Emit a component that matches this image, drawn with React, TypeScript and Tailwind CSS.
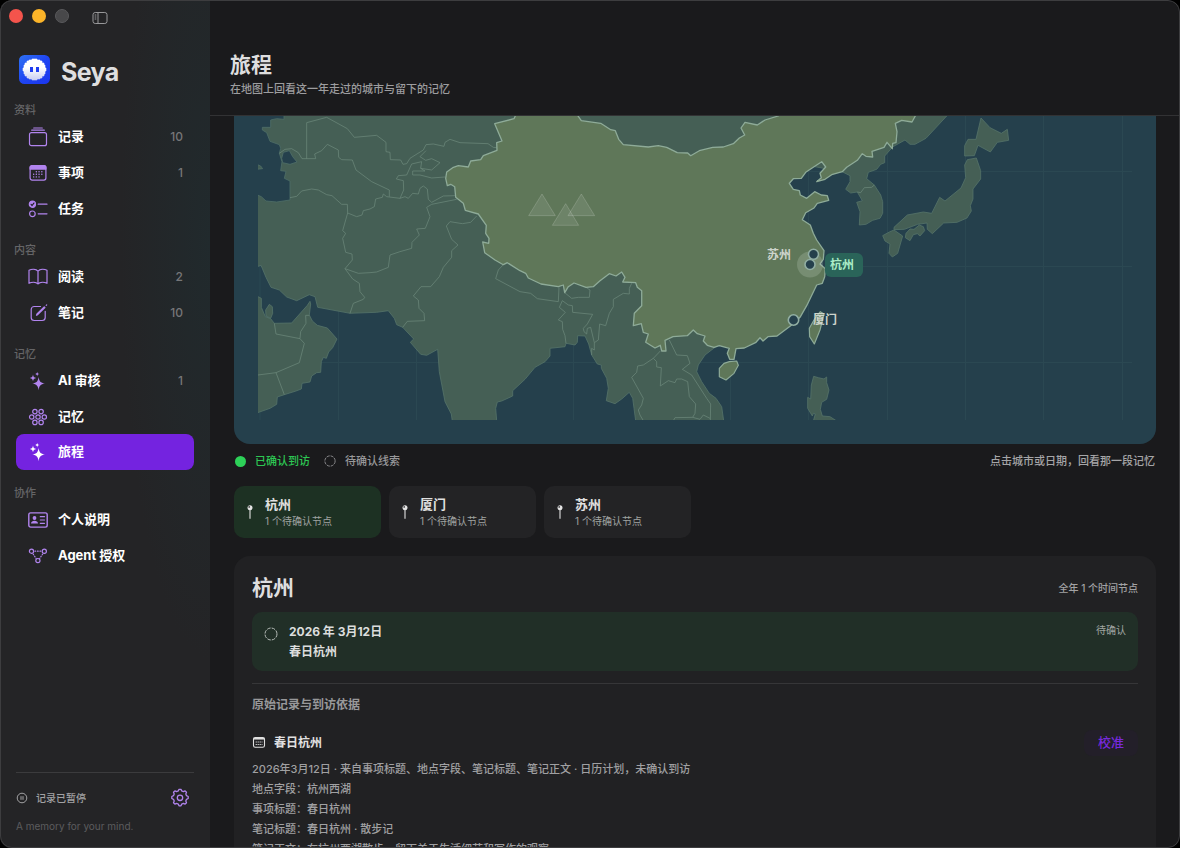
import type { ReactNode } from "react";

const ACCENT = "#b184ee";

function Icon({ children, className = "h-5 w-5" }: { children: ReactNode; className?: string }) {
  return (
    <svg viewBox="0 0 20 20" className={className} fill="none" stroke="currentColor" strokeWidth="1.2" strokeLinecap="round" strokeLinejoin="round" aria-hidden="true">
      {children}
    </svg>
  );
}

const icons: Record<string, ReactNode> = {
  records: (
    <>
      <rect x="1.5" y="5.7" width="17" height="13" rx="2" />
      <path d="M3.7 3.2h12.6M5.7 1h8.6" />
    </>
  ),
  calendar: (
    <>
      <rect x="2.1" y="2.5" width="15.8" height="14.6" rx="2" />
      <path d="M2.1 4.5a2 2 0 0 1 2-2h11.8a2 2 0 0 1 2 2v1.6H2.1z" fill="currentColor" />
      <path d="M8.3 8.7h.1M11 8.7h.1M13.8 8.7h.1M5.6 11.3h.1M8.3 11.3h.1M11 11.3h.1M13.8 11.3h.1M5.6 13.9h.1M8.3 13.9h.1M11 13.9h.1" strokeWidth="1.4" />
    </>
  ),
  tasks: (
    <>
      <circle cx="4.4" cy="5.2" r="3.1" fill="currentColor" />
      <path d="M3.1 5.3l1 1.2 1.800-2.400" stroke="#242426" />
      <circle cx="4.4" cy="14.8" r="2.8" />
      <path d="M10.2 5.2h8.8M10.2 14.8h8.8" />
    </>
  ),
  book: <path d="M10 4.2C8 2.100 4 1.900 1 3.300v13c3-1.400 7-1.200 9 .6 2-1.800 6-2 9-.6v-13C16 1.900 12 2.100 10 4.200zM10 4.200v12.700" />,
  note: (
    <>
      <path d="M12.500 3.500H6.200a3 3 0 0 0-3 3v8a3 3 0 0 0 3 3h8a3 3 0 0 0 3-3V8.300" />
      <path d="M8.500 12.300l.5-1.300 7.200-7.200.7.700-7.200 7.200zM18.200 2.300l.5-.5" />
    </>
  ),
  sparkles: (
    <g fill="currentColor" stroke="none">
      <path d="M10.600 6c.7 4.400 1.900 5.800 6.300 6.600-4.400.8-5.600 2.200-6.300 6.600-.7-4.400-1.900-5.800-6.300-6.600C8.700 11.800 9.900 10.400 10.600 6z" />
      <path d="M5 3.500c.4 2.300 1 3 3.200 3.400C6 7.300 5.400 8 5 10.300 4.600 8 4 7.300 1.800 6.900 4 6.500 4.600 5.800 5 3.500z" />
      <path d="M9.200.8c.3 1.500.7 2 2.200 2.300-1.500.3-1.900.8-2.200 2.300-.3-1.500-.7-2-2.200-2.300 1.500-.3 1.900-.8 2.200-2.300z" />
    </g>
  ),
  memory: (
    <>
      {[[6.9, 4.6], [13.1, 4.6], [3.7, 10], [10, 10], [16.3, 10], [6.9, 15.4], [13.1, 15.4]].map(([x, y]) => (
        <circle key={`${x}-${y}`} cx={x} cy={y} r="2.200" />
      ))}
    </>
  ),
  profile: (
    <>
      <rect x=".8" y="2.900" width="18.400" height="14.200" rx="1.800" strokeWidth="1.400" />
      <circle cx="6.500" cy="8" r="1.900" fill="currentColor" stroke="none" />
      <path d="M3 13.600c0-3.800 7-3.800 7 0z" fill="currentColor" stroke="none" />
      <path d="M12.300 6.700h4.200M12.300 10h4.200M12.300 13.300h4.200" />
    </>
  ),
  agent: (
    <>
      <circle cx="3.500" cy="5.200" r="2.100" />
      <circle cx="16.300" cy="5.200" r="2.100" />
      <circle cx="9.900" cy="14.600" r="2.100" />
      <path d="M7 5.200h6M5.200 8.200l2.900 4.200M14.600 8.200l-2.900 4.200" strokeDasharray=".7 1.800" />
    </>
  ),
};

type Item = { icon: string; label: string; count?: number; active?: boolean };
const groups: { title: string; items: Item[] }[] = [
  {
    title: "资料",
    items: [
      { icon: "records", label: "记录", count: 10 },
      { icon: "calendar", label: "事项", count: 1 },
      { icon: "tasks", label: "任务" },
    ],
  },
  {
    title: "内容",
    items: [
      { icon: "book", label: "阅读", count: 2 },
      { icon: "note", label: "笔记", count: 10 },
    ],
  },
  {
    title: "记忆",
    items: [
      { icon: "sparkles", label: "AI 审核", count: 1 },
      { icon: "memory", label: "记忆" },
      { icon: "sparkles", label: "旅程", active: true },
    ],
  },
  {
    title: "协作",
    items: [
      { icon: "profile", label: "个人说明" },
      { icon: "agent", label: "Agent 授权" },
    ],
  },
];

function AppLogo() {
  return (
    <svg viewBox="0 0 31 29" className="h-[29px] w-[31px]" aria-hidden="true">
      <defs>
        <linearGradient id="logo-bg" x1="0" y1="0" x2="1" y2="1">
          <stop offset="0" stopColor="#2f73f3" />
          <stop offset=".5" stopColor="#1f45f2" />
          <stop offset="1" stopColor="#1b35ee" />
        </linearGradient>
        <linearGradient id="logo-puff" x1="0" y1="0" x2="0" y2="1">
          <stop offset=".4" stopColor="#fff" />
          <stop offset="1" stopColor="#c9cdf2" />
        </linearGradient>
      </defs>
      <rect width="31" height="29" rx="5.500" fill="url(#logo-bg)" />
      <path
        d="M13 4h5v1h3v1h2v2h2v2h1v3h1v3h-1v3h-1v2h-2v2h-2v1h-3v1h-5v-1h-3v-1H8v-2H6v-2H5v-3H4v-3h1v-3h1V8h2V6h2V5h3z"
        fill="url(#logo-puff)"
        stroke="url(#logo-puff)"
        strokeWidth=".6"
        strokeLinejoin="round"
      />
      <path d="M11 12h3v5h-3zM17 12h3v5h-3z" fill="#1f3df0" />
    </svg>
  );
}

function Sidebar() {
  return (
    <aside className="flex w-[210px] shrink-0 flex-col bg-[#242426] bg-[radial-gradient(ellipse_90px_420px_at_210px_240px,#212a2d,#242426)]">
      <div className="flex h-8 items-center pl-[9px]">
        <div className="flex gap-[9px]">
          <button aria-label="关闭" className="h-3.5 w-3.5 rounded-full bg-[#f4544c]" />
          <button aria-label="最小化" className="h-3.5 w-3.5 rounded-full bg-[#fbb429]" />
          <button aria-label="缩放" className="h-3.5 w-3.5 rounded-full border border-[#5a5a5c] bg-[#48484a]" />
        </div>
        <button aria-label="切换边栏" className="mt-1 ml-[23px] text-[#98989a]">
          <svg viewBox="0 0 16 14" className="h-3.5 w-4" fill="none" stroke="currentColor" strokeWidth="1">
            <rect x="1" y="1.500" width="14" height="11" rx="2.200" />
            <path d="M6 1.500v11M2.700 4h1.600M2.700 6h1.600M2.700 8h1.600" />
          </svg>
        </button>
      </div>
      <div className="mt-5 flex h-[35px] items-center gap-[11px] pl-[19px]">
        <AppLogo />
        <span className="pt-1 text-[25px] leading-8 font-bold tracking-tight text-[#dededf]">Seya</span>
      </div>
      <nav className="mt-3.5 flex flex-col gap-3.5">
        {groups.map((g) => (
          <section key={g.title}>
            <h2 className="pl-3.5 text-[11px] leading-[18px] font-medium text-[#656567]">{g.title}</h2>
            <ul className="px-4">
              {g.items.map((it) => (
                <li key={it.label}>
                  <a
                    href="#"
                    className={
                      it.active
                        ? "-mt-px flex h-9 items-center rounded-lg bg-[#7423e0] pr-[11px] pl-3 text-white"
                        : "flex h-9 items-center rounded-lg pr-[11px] pl-3 text-[#b184ee]"
                    }
                  >
                    <Icon>{icons[it.icon]}</Icon>
                    <span className="ml-2.5 text-[13px] font-bold text-white">{it.label}</span>
                    {it.count !== undefined && <span className="ml-auto text-xs font-medium text-[#767678]">{it.count}</span>}
                  </a>
                </li>
              ))}
            </ul>
          </section>
        ))}
      </nav>
      <footer className="mt-auto px-4 pb-3">
        <div className="flex items-center border-t border-[#3b3b3d] pt-[15px] pr-1 text-[#a2a2a4]">
          <svg viewBox="0 0 12 12" className="h-3 w-3" fill="none" stroke="currentColor" strokeWidth="1" aria-hidden="true">
            <circle cx="6" cy="6" r="4.800" />
            <path d="M5 4.200v3.600M7 4.200v3.600" />
          </svg>
          <span className="ml-2 text-[10px] font-medium">记录已暂停</span>
          <button aria-label="设置" className="ml-auto">
            <svg viewBox="0 0 20 20" className="h-5 w-5" fill="none" stroke={ACCENT} strokeWidth="1.300" strokeLinejoin="round">
              <path d="M8.300 2.900 9 1.300h2l.7 1.600 1.700.7 1.700-.7 1.400 1.400-.7 1.700.7 1.700 1.700.8v2l-1.700.8-.7 1.700.7 1.700-1.400 1.400-1.700-.7-1.700.7-.7 1.700H9l-.7-1.700-1.700-.7-1.700.7-1.400-1.400.7-1.700-.7-1.700-1.700-.8v-2l1.700-.8.700-1.700-.7-1.700 1.400-1.400 1.700.7z" />
              <circle cx="10" cy="9.800" r="2.700" />
            </svg>
          </button>
        </div>
        <p className="mt-2 text-[10px] leading-5 text-[#5c5c5e]">A memory for your mind.</p>
      </footer>
    </aside>
  );
}

const mainland =
  "258,110 953,110 946.7,116 926,138.3 915,144.3 910,144.3 905,140 893,146.7 890,150 884.7,156 884.7,162.7 880.7,164.3 876.7,169.3 868.3,172.3 866.7,178.7 874.3,185 880.7,195 882.7,201.7 882.7,213.3 880,218.3 872.7,220.3 866,224.3 859.3,225 860,211.7 856.7,202.3 862.3,200.7 857.3,192 850.7,193 845.7,189.3 850,181.7 850,175.7 842.7,172 780,160 700,330 716.7,346 705,355 698.3,365 696.7,371.7 701.7,381.7 709.3,393.3 716,398.3 721.7,406.7 723.7,421 635.7,421 634,408.3 632.7,398.3 629.3,392.3 621.7,399 615,403.7 606.3,400.7 608.3,388.3 606.7,378.3 601.3,368.3 601.3,365 597.3,364 591.7,355 588.7,344 585,336 577.7,335.7 577.3,342.3 575,345 566,343.3 565,346.7 550,348.3 550,356 545,361.7 535,367.3 525,379.3 512.7,390.7 512.7,396 501.7,401 497.3,402 495.7,408.3 496.7,421 452.3,421 451.3,414 445,401.7 439.3,371.7 437.7,349.3 426.7,355.3 420.7,354.3 410.3,342.3 413.7,339 402.7,327.3 396.7,324.7 394.3,318.3 388.3,310.7 376.7,312.3 350,313.3 317.7,307.3 315,296.7 309.3,294.7 296.7,300.7 286.7,297 279.3,290 271,287.3 266,277.3 261,265.3 257,266.7";

const china =
  "515.3,110 515.3,116 514,118.7 494.7,123.7 502,141 496.7,142.7 497,150.3 483.3,155.7 480.7,159.7 470.7,161 468.3,167 458.3,165.7 452.7,167.7 446.7,172 445.7,178.3 447.3,185.7 450.7,184.3 454.7,186.7 455.7,197.3 463.3,203.3 465.3,210.3 478.3,214 486.3,225.3 485.7,233.3 489,238.3 488.7,243.3 482.7,242 484.7,252.7 495,260 503.3,264.7 507.3,262.7 520,270.7 525.7,273.3 528.3,278 541,284 558.3,286.7 563.3,285 564.7,292.7 568.3,286.7 574,283 586,287.3 593.3,286.7 600,280.7 609.3,273.7 616,276 621.7,272 625,277.3 622.7,282 635.7,282.7 637.3,287.3 641.7,290.7 641.7,305.7 634.3,313.3 633.3,325.7 641.3,323.7 643.3,332.3 648.3,334 645.7,342.3 655,348 660.3,345.3 661.7,351 666,351 665,340.3 673,336.7 687.3,335.7 693.3,330 697.3,333.7 705,336 703.3,341 707.3,345.3 714,347.3 719.3,345.7 729.3,348.3 727.3,353.3 729.7,359.3 734,359.3 736,348.7 744.3,348 756,342.3 760,337.7 763,341 768,336.7 777,336 791.7,325 800,317.3 806.7,305.7 816.7,285 822.3,283.3 824.7,276.7 825.3,268.7 820,264 823.3,259.3 824,250.7 816.7,240 813.3,233.3 810.3,225 802.3,219.7 805.7,212.7 814,208 817.3,203.3 828.7,200.3 827.3,195.7 821.3,195 814.7,191.7 806.7,198.3 800.3,195 799.3,190.7 793.3,189.3 789.3,183.3 793.3,178.7 801.3,178.3 805.7,172.3 816.7,165 821.7,161.7 825.7,167 820,173.3 821.3,177.7 816.7,181.7 825,179.3 831.7,174.7 842.3,171.7 846.7,167.3 857.3,160.3 862.3,153.7 866,156.3 872.7,157 872,151.3 884,147.3 887,142.3 892.3,148.7 892.7,143.3 896,142.7 897,131.7 895.3,123.3 901.7,120.3 912,122 915.3,116 915.3,110 778.3,110 778.3,116 765,120 757.3,125 745,122.3 741,128 744.7,135 739.3,138 733.3,143.7 723.3,147 712.7,147.3 699.3,150.7 690.7,155.7 687.7,153 677.3,152.7 666.7,147.3 658.3,145.7 648.3,147 623.3,144.7 618.7,139.3 615.3,130.7 610.7,129.7 600.7,123.3 581.3,120.7 578,116 578,110";

const westBorders = [
  "M230 146V38L290 22 352 56 373 82 440 76 468 97V125L480 127 481 149 512 150 519 163 530 161 540 145 580 120 588 104 610 102 642 109 645 97 660 88 690 98 774 101 790 112 800 113",
  "M148 130L165 118 185 116 205 128 216 146H257L254 132 275 122 292 103 325 120 326 142 335 149 367 150 378 180 425 215 478 240V260",
  "M180 263L200 259 215 243 245 237 265 240 290 254 306 257 335 283H352L353 309 380 320 396 315 400 302 420 297 433 290 437 267 457 262 460 252 470 260 510 265 525 260 535 265 548 250 565 252 570 235 580 228 592 237 595 268 605 277 640 258 675 257",
  "M510 265L521 240 520 212 499 207 505 197 530 195 545 162 575 155 572 175 605 180 630 158 605 146 587 151 570 140 588 122",
  "M572 175L585 183 548 183V195H570L605 204 645 201",
  "M680 268L605 283 590 292 600 320 586 355 560 357 568 375 546 397 545 415 510 425 480 435 475 472 440 486 420 488 385 490 345 476",
  "M353 309L338 362 347 370 338 385 347 427 366 432 367 450 345 476 368 507 388 520 390 545 404 562 400 568 370 580 360 610",
  "M740 318L722 337 697 341 660 335 649 348 665 388 684 405 665 422V442L640 472 628 500 602 530H573L550 558 565 570 567 595 582 610 584 632 532 634 518 652",
];
const southBorders = [
  "M190 44L175 60 167 86 240 125 272 130 292 146 355 155 357 112",
  "M374 128L395 145 415 142 448 142 450 120 438 112",
  "M378 280L375 257 368 238 367 215 355 210 376 187 358 172 367 152 385 165 397 167 398 187 458 193 442 222 430 235 432 245 440 252 442 235 452 232 463 278 475 270 479 222 497 227 508 190 520 170 520 148 550 130 568 132 568 115 575 100",
  "M463 278V300L455 295V315",
  "M661 303L640 325 610 345 593 348 590 367 575 382 610 445 605 465 595 480 600 495 610 512",
  "M640 325L650 335V351L664 353 661 408 685 392 705 398 710 387 725 387 743 395 748 440 767 462 765 490 758 502 705 503 700 512",
  "M688 270L710 315 742 317 750 340 727 358 755 375 800 445 812 462 811 512",
  "M758 502L780 508 790 495 810 505",
];
const japan = [
  "453,24 480,53 514,70 532,58 536,91 502,97 481,126 444,106 433,137 404,138 404,107 414,88 438,88",
  "412,149 439,144 452,182 452,207 429,237 429,267 421,287 424,303 411,324 381,337 341,339 307,371 292,358 291,339 263,343 223,358 192,359 192,352 232,315 280,306 305,310 329,262 345,273 393,234 407,203 404,165",
  "228,370 240,357 252,358 268,345 280,350 284,362 270,378 262,371 250,374 240,392 226,383",
  "192,360 218,378 203,430 187,441 177,430 180,402 165,393 158,377 180,365",
];

function AsiaMap() {
  return (
    <svg viewBox="234 116 922 328" className="block w-full" aria-hidden="true">
      <defs>
        <clipPath id="map-area">
          <rect x="258" y="116" width="874" height="304" />
        </clipPath>
      </defs>
      <g clipPath="url(#map-area)" strokeLinejoin="round">
        <path d="M260 116V420M338.500 116V420M416.500 116V420M573.500 116V420M730.500 116V420M808.500 116V420M887.500 116V420M965.500 116V420M1043.500 116V420M1122.500 116V420M258 171.500H1132M258 266.500H1132M258 362.500H1132" stroke="#2b4852" fill="none" />
        <g fill="#455f55" stroke="#56736a" strokeWidth=".8">
          <polygon points={mainland} />
          <g transform="translate(230 260) scale(.33333)" strokeWidth="2.400">
            <polygon points="80,108 94,115 94,142 106,170 122,176 133,190 185,189 232,136 240,124 242,132 238,165 247,183 262,196 292,204 321,237 308,263 296,276 289,295 280,292 274,305 272,337 260,338 245,348 240,366 216,370 214,387 195,394 163,404 142,411 140,433 120,445 80,459" />
            <polygon points="118,133 127,140 128,160 122,175 108,168 107,150" />
          </g>
          <g transform="translate(830 110) scale(.33333)" strokeWidth="2.400">
            {japan.map((p) => (
              <polygon key={p} points={p} />
            ))}
          </g>
          <polygon
            transform="translate(640 240) scale(.33333)"
            strokeWidth="2.400"
            points="521,409 535,413 552,417 560,411 560,428 567,450 560,478 545,487 541,508 547,528 570,530 590,543 520,543 526,522 520,520 517,528 503,505 503,472 512,477 514,435"
          />
        </g>
        <g transform="translate(230 110) scale(.33333)" fill="#25404c" stroke="#4f6e68" strokeWidth="2.400">
          <polygon points="80,10 162,10 162,28 140,26 122,30 122,52 97,52 97,60 110,68 120,94 148,104 152,115 148,130 156,155 152,182 168,184 163,205 180,213 180,270 140,276 108,273 94,260 80,254" />
          <polygon points="160,127 178,122 188,140 201,156 180,163 158,158 155,145" />
          <polygon points="80,163 92,168 98,176 80,178" fill="#455f55" />
        </g>
        <g fill="none" stroke="#6f8b7e" strokeWidth="2.400" strokeOpacity=".85">
          <g transform="translate(230 110) scale(.33333)">
            {westBorders.map((d) => (
              <path key={d} d={d} />
            ))}
          </g>
          <g transform="translate(440 250) scale(.33333)">
            {southBorders.map((d) => (
              <path key={d} d={d} />
            ))}
          </g>
          <path transform="translate(230 260) scale(.33333)" d="M133 190L138 222 210 236 212 215 228 190 227 166H238M210 236L223 250 208 308 138 338 84 345M138 338L163 404" />
          <path transform="translate(830 110) scale(.33333)" d="M82 246L92 248 103 233 125 232 133 225" />
        </g>
        <g fill="#5f7759" stroke="#8eab98" strokeWidth="1.300">
          <polygon points={china} />
          <g transform="translate(640 240) scale(.33333)" strokeWidth="3.500">
            <polygon points="290,363 295,376 282,400 258,420 238,410 238,385 252,370 268,365" />
            <polygon points="541,215 552,222 540,270 523,312 509,290 508,265 525,235" />
          </g>
        </g>
        <g transform="translate(440 110) scale(.33333)" fill="#fff" fillOpacity=".09" stroke="#fff" strokeOpacity=".17" strokeWidth="3">
          <path d="M306 252L346 317H266z" />
          <path d="M377 281L416 346H337z" />
          <path d="M424 252L464 317H384z" />
        </g>
      </g>
      <circle cx="810" cy="264.500" r="13" fill="#d7e6d8" fillOpacity=".2" />
      <g fill="#25404c" stroke="#91aea3" strokeWidth="1.600">
        <circle cx="813.500" cy="254.300" r="5" />
        <circle cx="810" cy="264.500" r="5" />
        <circle cx="793.500" cy="320" r="5.200" />
      </g>
    </svg>
  );
}

function Pin() {
  return (
    <svg viewBox="0 0 8 16" className="h-4 w-2 shrink-0" aria-hidden="true">
      <circle cx="4" cy="3.700" r="2.500" fill="#e4e4e4" />
      <circle cx="3.200" cy="2.900" r=".9" fill="#454547" />
      <path d="M4 5.800v9" stroke="#e4e4e4" strokeWidth="1.100" />
    </svg>
  );
}

function DashedCircle({ className }: { className: string }) {
  return (
    <svg viewBox="0 0 14 14" className={className} fill="none" stroke="currentColor" strokeWidth="1" strokeDasharray="3.600 1.110" aria-hidden="true">
      <circle cx="7" cy="7" r="6" />
    </svg>
  );
}

const cities = [
  { name: "杭州", active: true },
  { name: "厦门", active: false },
  { name: "苏州", active: false },
];

const evidence = ["2026年3月12日 · 来自事项标题、地点字段、笔记标题、笔记正文 · 日历计划，未确认到访", "地点字段：杭州西湖", "事项标题：春日杭州", "笔记标题：春日杭州 · 散步记", "笔记正文：在杭州西湖散步，留下关于生活细节和写作的观察"];

export default function App() {
  return (
    <div className="h-screen bg-black font-['Inter','Noto_Sans_CJK_SC',sans-serif]">
      <div className="relative flex h-full overflow-hidden rounded-xl bg-[#1a1a1c]">
        <Sidebar />
        <main className="flex min-w-0 flex-1 flex-col overflow-hidden">
          <header className="shrink-0 border-b border-[#323234] px-5 pt-[49px] pb-[18px]">
            <h1 className="text-[21px] leading-8 font-bold text-[#dededf]">旅程</h1>
            <p className="text-[11px] leading-4 font-medium text-[#9d9d9f]">在地图上回看这一年走过的城市与留下的记忆</p>
          </header>
          <div className="min-h-0 flex-1 overflow-y-auto px-6 [scrollbar-width:none]">
            <div className="relative overflow-hidden rounded-b-2xl bg-[#25404c]">
              <AsiaMap />
              <button className="absolute top-[42.4%] left-[57.8%] -translate-y-1/2 text-xs font-bold text-[#cdd4cc]">苏州</button>
              <button className="absolute top-[45.4%] left-[64.1%] h-6 -translate-y-1/2 rounded-md bg-[#2a6459] pr-[9px] pl-[5px] text-xs font-bold text-[#a9ecc6]">杭州</button>
              <button className="absolute top-[62.2%] left-[62.8%] -translate-y-1/2 text-xs font-bold text-[#cdd4cc]">厦门</button>
            </div>

            <div className="flex h-[34px] items-center text-[11px] font-medium text-[#98989a]">
              <span className="ml-px h-[11px] w-[11px] rounded-full bg-[#2dd158]" />
              <span className="ml-[9px] text-[#2dc653]">已确认到访</span>
              <DashedCircle className="ml-3.5 h-3 w-3" />
              <span className="ml-[9px]">待确认线索</span>
              <span className="ml-auto pr-px text-[#a5a5a7]">点击城市或日期，回看那一段记忆</span>
            </div>

            <div className="mt-2 flex gap-2">
              {cities.map((c) => (
                <button
                  key={c.name}
                  className={
                    c.active
                      ? "flex h-[52px] w-[147px] items-center gap-[11px] rounded-[10px] bg-[#1d3123] px-3 text-left"
                      : "flex h-[52px] w-[147px] items-center gap-[11px] rounded-[10px] bg-[#232325] px-3 text-left"
                  }
                >
                  <Pin />
                  <span>
                    <span className="block text-[13px] leading-[18px] font-bold text-[#e0e0e0]">{c.name}</span>
                    <span className="block text-[10px] leading-4 text-[#a0a3a1]">1 个待确认节点</span>
                  </span>
                </button>
              ))}
            </div>

            <section className="mt-[18px] rounded-2xl bg-[#212123] px-[18px] pt-4 pb-6">
              <div className="flex h-8 items-center justify-between">
                <h2 className="text-[21px] font-bold text-[#dededf]">杭州</h2>
                <span className="text-[10px] font-medium text-[#a2a2a4]">全年 1 个时间节点</span>
              </div>
              <button className="mt-2 flex h-[59px] w-full items-start rounded-[10px] bg-[#212f27] px-3 pt-2.5 text-left">
                <DashedCircle className="mt-[5px] h-3.5 w-3.5 shrink-0 text-[#b5bbb7]" />
                <span className="ml-[11px] flex-1 font-bold text-[#dcdedd]">
                  <span className="block text-xs leading-5">2026 年 3月12日</span>
                  <span className="block text-xs leading-5">春日杭州</span>
                </span>
                <span className="text-[10px] leading-4 text-[#a0a6a2]">待确认</span>
              </button>
              <div className="mt-3 border-t border-[#363638] pt-[11px]">
                <h3 className="text-xs leading-5 font-bold text-[#98989a]">原始记录与到访依据</h3>
                <div className="mt-[15px] flex h-[26px] items-center text-[#e0e0e0]">
                  <svg viewBox="0 0 14 14" className="h-3.5 w-3.5" fill="none" stroke="currentColor" strokeWidth="1.100" aria-hidden="true">
                    <rect x="1.500" y="1.500" width="11" height="9.800" rx="1.800" />
                    <path d="M1.500 2.700h11" strokeWidth="1.700" />
                    <path d="M3.600 6h6.900M3.600 8.500h6.900" strokeWidth=".8" strokeDasharray="1.500 .5" />
                  </svg>
                  <h4 className="ml-2 text-xs font-bold">春日杭州</h4>
                  <button className="ml-auto h-[26px] rounded-lg bg-[#231f29] px-3.5 text-[13px] font-medium text-[#7729dc]">校准</button>
                </div>
                <div className="mt-[3px] text-[11px] leading-5 font-medium text-[#a0a0a2]">
                  {evidence.map((line) => (
                    <p key={line}>{line}</p>
                  ))}
                </div>
              </div>
            </section>
          </div>
        </main>
        <div className="pointer-events-none absolute inset-0 rounded-xl border border-[#3d3d3f]" />
      </div>
    </div>
  );
}
